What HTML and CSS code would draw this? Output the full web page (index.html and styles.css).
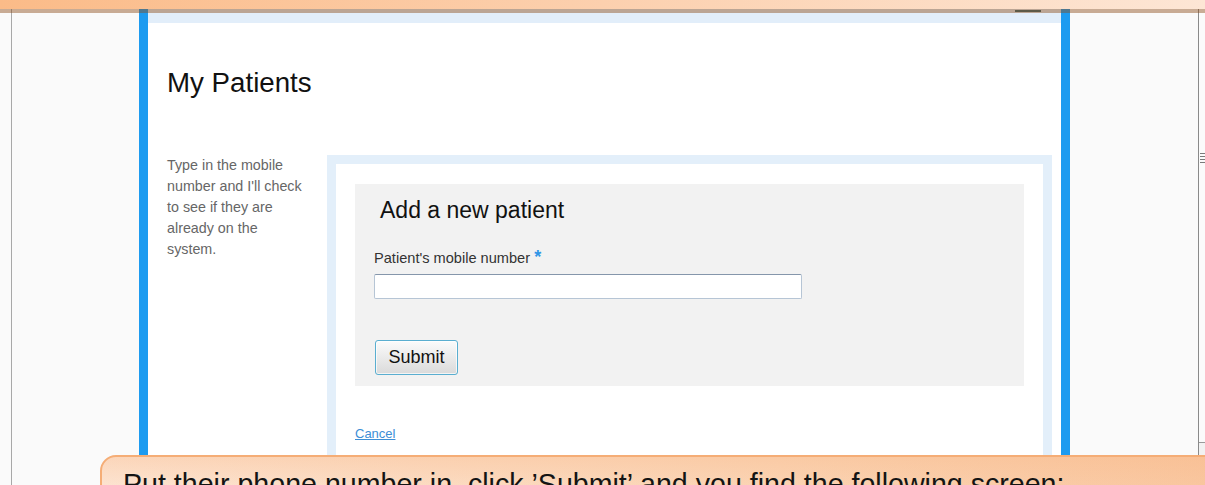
FILE: index.html
```html
<!DOCTYPE html>
<html lang="en">
<head>
<meta charset="utf-8">
<title>My Patients</title>
<link rel="stylesheet" href="styles.css">
</head>
<body>
<div class="topbar">
  <div class="topbar-shade"><span class="topbar-tab"></span></div>
</div>
<div class="viewport">
  <div class="window">
    <div class="page">
      <div class="page-band"></div>
      <h1 class="page-title">My Patients</h1>
      <div class="page-body">
        <p class="hint">Type in the mobile number and I'll check to see if they are already on the system.</p>
        <div class="panel">
          <form class="card">
            <h2 class="card-title">Add a new patient</h2>
            <label class="field-label" for="mobile">Patient's mobile number <span class="required">*</span></label>
            <input class="field-input" id="mobile" type="text">
            <button class="btn-submit" type="button">Submit</button>
          </form>
          <p class="panel-foot"><a class="cancel" href="#">Cancel</a></p>
        </div>
      </div>
    </div>
  </div>
  <div class="scrollbar">
    <div class="scroll-track"><span class="scroll-grip"></span></div>
  </div>
</div>
<div class="caption">Put their phone number in, click ’Submit’ and you find the following screen:</div>
</body>
</html>
```

FILE: styles.css
```css
* {
  box-sizing: border-box;
}

html,
body {
  margin: 0;
  height: 485px;
  overflow: hidden;
}

body {
  position: relative;
  background: #fafafa;
  font-family: "Liberation Sans", Arial, sans-serif;
}

/* orange strip across the top, with its darker lower edge */
.topbar {
  position: relative;
  z-index: 2;
  height: 9px;
  background: linear-gradient(to right, #fbbb88, #fcd0ae 50%, #fde6d5);
}

.topbar-shade {
  position: absolute;
  left: 0;
  right: 0;
  top: 9px;
  height: 4px;
  background: rgba(140, 75, 25, 0.45);
}

.topbar-tab {
  position: absolute;
  left: 1015px;
  top: 1px;
  width: 26px;
  height: 2px;
  background: #5d5a48;
}

/* browser window area */
.viewport {
  display: flex;
  height: 476px;
}

.window {
  flex: 1;
  margin-left: 11px;
  padding-left: 127px;
  border-left: 1px solid #a8a8a8;
}

.page {
  display: flex;
  flex-direction: column;
  width: 931px;
  height: 100%;
  background: #fff;
  border-left: 9px solid #1d9bf0;
  border-right: 9px solid #1d9bf0;
}

.page-band {
  height: 14px;
  background: #e2eefa;
}

.page-title {
  margin: 44px 0 0 19px;
  font-size: 27.7px;
  line-height: 32px;
  font-weight: normal;
  color: #111;
}

.page-body {
  flex: 1;
  display: flex;
  margin-top: 56px;
  padding-left: 19px;
}

.hint {
  width: 160px;
  margin: 0;
  padding-right: 18px;
  font-size: 14.3px;
  line-height: 21px;
  color: #666;
}

.panel {
  width: 725px;
  padding: 20px 19px 0;
  background: #fff;
  border: 9px solid #e3effa;
  border-bottom: none;
}

.card {
  margin: 0;
  padding: 12px 19px 11px;
  background: #f2f2f2;
}

.card-title {
  margin: 0 0 0 6px;
  font-size: 23px;
  line-height: 28px;
  font-weight: normal;
  color: #111;
}

.field-label {
  display: block;
  margin-top: 25px;
  font-size: 14.6px;
  line-height: 18px;
  color: #333;
}

.required {
  font-size: 18px;
  line-height: 0;
  font-weight: bold;
  color: #2f95e6;
}

.field-input {
  display: block;
  margin: 7px 0 0;
  width: 428px;
  height: 25px;
  padding: 0 4px;
  background: #fff;
  border: 1px solid #b6c5d5;
  border-top-color: #8596ab;
  border-radius: 2px;
}

.btn-submit {
  display: block;
  margin: 41px 0 0 1px;
  width: 83px;
  height: 35px;
  padding: 0;
  font-family: "Liberation Sans", Arial, sans-serif;
  font-size: 18px;
  color: #111;
  background: linear-gradient(#fbfbfb, #dadada);
  border: 1px solid #5aaed0;
  border-radius: 3px;
  box-shadow: inset 0 0 0 1px rgba(255, 255, 255, 0.7);
}

.panel-foot {
  margin: 40px 0 0;
  font-size: 13px;
  line-height: 16px;
}

.cancel {
  color: #3d8ed6;
  text-decoration: underline;
}

/* vertical scrollbar at the right edge */
.scrollbar {
  width: 7px;
  background: #f2f2f2;
  border-left: 1px solid #8a8a8a;
}

.scroll-track {
  height: 434px;
  padding-top: 144px;
  border-bottom: 1px solid #9a9a9a;
  background: #fbfbfb;
}

.scroll-grip {
  display: block;
  width: 5px;
  height: 10px;
  margin-left: 1px;
  background: repeating-linear-gradient(#7a7a7a 0 1px, transparent 1px 3px);
}

/* caption box over the lower edge */
.caption {
  position: absolute;
  z-index: 3;
  left: 100px;
  right: -30px;
  top: 455px;
  height: 60px;
  padding: 10px 0 0 21px;
  font-size: 28.6px;
  line-height: 34px;
  color: #141414;
  white-space: nowrap;
  border: 2px solid #f5ad76;
  border-radius: 16px 0 0 0;
  background:
    linear-gradient(to bottom, rgba(248, 180, 130, 0.35), rgba(255, 255, 255, 0) 70%),
    linear-gradient(to right, #fde8d8, #fbd6b7 60%, #f9c7a0);
}
```
